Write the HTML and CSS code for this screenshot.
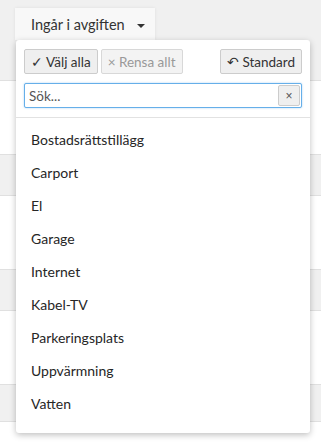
FILE: index.html
```html
<!DOCTYPE html>
<html lang="sv">
<head>
    <meta charset="UTF-8">
    <meta name="viewport" content="width=device-width, initial-scale=1.0">
    <title>Ingår i avgiften</title>
    <link rel="stylesheet" href="styles.css">
</head>
<body>
    <div class="toolbar">
        <div class="filter">
            <button class="filter-toggle">Ingår i avgiften <span class="caret"></span></button>

            <div class="filter-menu">
                <div class="menu-actions">
                    <button class="btn">&#10003; Välj alla</button>
                    <button class="btn disabled">&times; Rensa allt</button>
                    <button class="btn btn-right">&#8630; Standard</button>
                </div>
                <div class="search-box">
                    <input type="text" class="search-input" placeholder="Sök...">
                    <button class="search-clear">&times;</button>
                </div>
                <ul class="option-list">
                    <li>Bostadsrättstillägg</li>
                    <li>Carport</li>
                    <li>El</li>
                    <li>Garage</li>
                    <li>Internet</li>
                    <li>Kabel-TV</li>
                    <li>Parkeringsplats</li>
                    <li>Uppvärmning</li>
                    <li>Vatten</li>
                </ul>
            </div>
        </div>
    </div>

    <div class="rows">
        <div class="row tall"></div>
        <div class="row short grey"></div>
        <div class="row tall"></div>
        <div class="row short grey"></div>
        <div class="row tall"></div>
        <div class="row shorter grey"></div>
        <div class="row last"></div>
    </div>
</body>
</html>
```

FILE: styles.css
```css
body {
    margin: 0;
    font-family: Lato, "Liberation Sans", sans-serif;
    background-color: #fff;
    color: #333;
}

.toolbar {
    height: 80px;
    background-color: #f0f0f0;
    padding: 8px 0 0 15px;
    box-sizing: border-box;
}

.filter {
    position: relative;
    display: inline-block;
}

.filter-toggle {
    font-family: inherit;
    font-size: 14.5px;
    color: #333;
    background-color: #f8f8f8;
    border: none;
    width: 140px;
    height: 32px;
    padding: 0 0 0 16px;
    text-align: left;
    box-shadow: 0 0 3px rgba(0, 0, 0, 0.08);
}

.caret {
    display: inline-block;
    margin-left: 9px;
    vertical-align: middle;
    border-top: 4px solid #333;
    border-left: 4px solid transparent;
    border-right: 4px solid transparent;
}

/* dropdown panel, lies over the rows */
.filter-menu {
    position: absolute;
    top: 32px;
    left: 1px;
    width: 294px;
    background-color: #fff;
    border-radius: 3px;
    box-shadow: 0 2px 6px rgba(0, 0, 0, 0.25);
    z-index: 10;
}

.menu-actions {
    display: flex;
    gap: 3px;
    padding: 9px 8px 0 8px;
}

.btn {
    font-family: inherit;
    font-size: 13.5px;
    color: #333;
    background-color: #efefef;
    border: 1px solid #ccc;
    border-radius: 2px;
    height: 25px;
    padding: 0 6px;
}

.btn.disabled {
    color: #999;
    background-color: #f3f3f3;
    border-color: #d8d8d8;
}

.btn-right {
    margin-left: auto;
}

.search-box {
    position: relative;
    margin: 9px 8px 0 8px;
}

.search-input {
    display: block;
    width: 100%;
    box-sizing: border-box;
    height: 25px;
    font-family: inherit;
    font-size: 13.5px;
    color: #333;
    padding: 0 4px;
    border: 1px solid #66afe9;
    border-radius: 2px;
    outline: none;
    box-shadow: 0 0 2px rgba(102, 175, 233, 0.6);
}

.search-input::placeholder {
    color: #555;
}

.search-clear {
    position: absolute;
    top: 2px;
    right: 2px;
    width: 22px;
    height: 21px;
    font-size: 12px;
    color: #555;
    background-color: #efefef;
    border: 1px solid #ccc;
    border-radius: 2px;
    padding: 0;
}

.option-list {
    list-style: none;
    margin: 9px 0 0 0;
    padding: 5px 0 13px 0;
    border-top: 1px solid #e2e2e2;
}

.option-list li {
    height: 33px;
    line-height: 33px;
    padding-left: 15px;
    font-size: 14px;
    color: #262626;
}

.row {
    height: 73px;
    border-top: 1px solid #e0e0e0;
    background-color: #fff;
}

.row.grey {
    background-color: #f0f0f0;
}

.row.short {
    height: 40px;
}

.row.shorter {
    height: 36px;
}

.row.last {
    height: 26px;
}
```
